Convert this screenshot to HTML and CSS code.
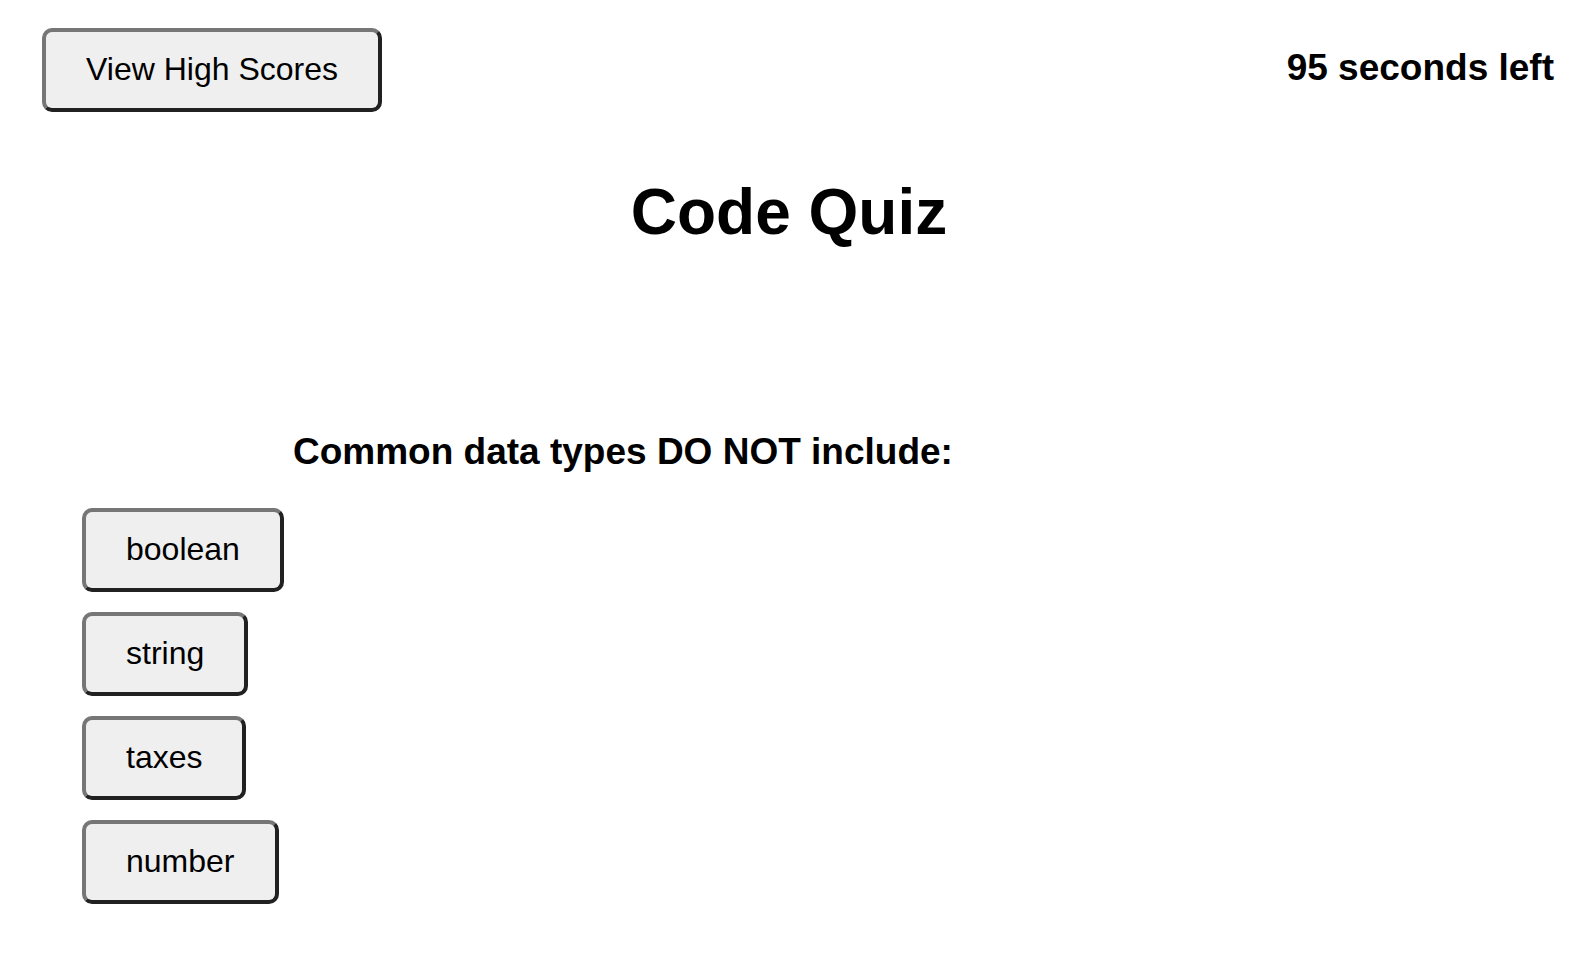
FILE: index.html
```html
<!DOCTYPE html>
<html lang="en">
<head>
<meta charset="utf-8">
<title>Code Quiz</title>
<link rel="stylesheet" href="styles.css">
</head>
<body>
<header class="top-bar">
  <button type="button" class="btn">View High Scores</button>
  <p class="timer">95 seconds left</p>
</header>
<main>
  <h1 class="title">Code Quiz</h1>
  <section class="quiz">
    <h2 class="question">Common data types DO NOT include:</h2>
    <ul class="answers">
      <li><button type="button" class="btn">boolean</button></li>
      <li><button type="button" class="btn">string</button></li>
      <li><button type="button" class="btn">taxes</button></li>
      <li><button type="button" class="btn">number</button></li>
    </ul>
  </section>
</main>
</body>
</html>
```

FILE: styles.css
```css
body {
  margin: 0;
  background: #fff;
  color: #000;
  font-family: "Liberation Sans", Arial, sans-serif;
}

.top-bar {
  display: flex;
  justify-content: space-between;
  align-items: flex-start;
  padding: 28px 24px 0 42px;
}

.btn {
  display: block;
  padding: 19px 40px 21px;
  border: 4px solid;
  border-color: #767676 #212121 #212121 #767676;
  border-radius: 10px;
  background: #efefef;
  color: #000;
  font: 32px/36px "Liberation Sans", Arial, sans-serif;
}

.timer {
  margin: 18px 0 0;
  font-size: 37px;
  font-weight: bold;
  line-height: 44px;
}

.title {
  margin: 62px 0 0;
  font-size: 64px;
  line-height: 76px;
  text-align: center;
}

.quiz {
  padding: 180px 82px 0;
}

.question {
  margin: 0 0 34px 211px;
  font-size: 37px;
  line-height: 44px;
}

.answers {
  display: flex;
  flex-direction: column;
  align-items: flex-start;
  gap: 20px;
  margin: 0;
  padding: 0;
  list-style: none;
}
```
